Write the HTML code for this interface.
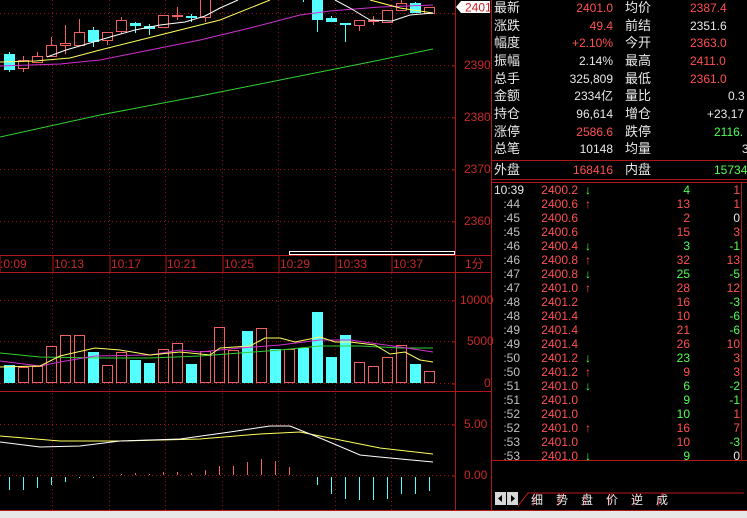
<!DOCTYPE html>
<html><head><meta charset="utf-8"><style>
html,body{margin:0;padding:0;background:#000;width:747px;height:518px;overflow:hidden}
svg{display:block}
text{font-family:"Liberation Sans","Noto Sans CJK SC",sans-serif;font-size:12px}
.ax{fill:#c82828}
.w{fill:#e8e8e8}.r{fill:#ff5050}.g{fill:#50ff50}
.lb{fill:#e8e8e8;font-size:13px}
</style></head><body>
<svg id="s" width="747" height="518" viewBox="0 0 747 518" xmlns="http://www.w3.org/2000/svg">
<rect width="747" height="518" fill="#000"/>
<rect x="0" y="511" width="747" height="7" fill="#e8e8e8"/>
<g stroke="#a01010" stroke-width="1" stroke-dasharray="1,3" fill="none">
<path d="M0 13.5H455M0 65.5H455M0 117.5H455M0 169.5H455M0 221.5H455M0 300.5H455M0 341.5H455M0 383.5H455M0 424.5H455M0 475.5H455"/>
<path d="M52.5 0V255M109.5 0V255M165.5 0V255M222.5 0V255M278.5 0V255M335.5 0V255M391.5 0V255"/>
<path d="M52.5 273V391M109.5 273V391M165.5 273V391M222.5 273V391M278.5 273V391M335.5 273V391M391.5 273V391"/>
<path d="M52.5 393V510M109.5 393V510M165.5 393V510M222.5 393V510M278.5 393V510M335.5 393V510M391.5 393V510"/>
</g>
<g stroke="#b01818" stroke-width="1" fill="none">
<path d="M455.5 0V510M0 255.5H492M0 272.5H492M0 391.5H492M0 510.5H747M491.5 0V510M491.5 160.5H747M491.5 179.5H747M491.5 182.5H747M741.5 182.5V460M491.5 460.5H747"/>
<path d="M452 14H456M452 66H456M452 118H456M452 170H456M452 222H456M452 301H456M452 342H456M452 384H456M452 425H456M452 476H456"/>
<path d="M0 255V272M53 255V272M110 255V272M166 255V272M223 255V272M279 255V272M336 255V272M392 255V272"/>
</g>
<rect x="289.5" y="251.5" width="165" height="3" fill="none" stroke="#fff"/>
<g id="chart"></g>
<path d="M461 1H490V13H461L456 7Z" fill="#fff"/>
<text x="465" y="11.5" fill="#d02020" font-size="12">2401</text>
<g class="ax">
<text x="464" y="69">2390</text><text x="464" y="121">2380</text><text x="464" y="173">2370</text><text x="464" y="225">2360</text>
<text x="460" y="304">10000</text><text x="467" y="345">5000</text><text x="484" y="387">0</text>
<text x="464" y="428">5.00</text><text x="464" y="479">0.00</text>
<text x="0" y="268">:0:09</text><text x="54" y="268">10:13</text><text x="111" y="268">10:17</text><text x="167" y="268">10:21</text><text x="224" y="268">10:25</text><text x="280" y="268">10:29</text><text x="337" y="268">10:33</text><text x="393" y="268">10:37</text>
<text x="465" y="268" font-size="12">1分</text>
</g>
<g font-size="13">
<text class="lb" x="494" y="12">最新</text><text class="r" x="613" y="12" text-anchor="end">2401.0</text><text class="lb" x="625" y="12">均价</text><text class="r" x="690" y="12">2387.4</text>
<text class="lb" x="494" y="30">涨跌</text><text class="r" x="613" y="30" text-anchor="end">49.4</text><text class="lb" x="625" y="30">前结</text><text class="w" x="690" y="30">2351.6</text>
<text class="lb" x="494" y="47">幅度</text><text class="r" x="613" y="47" text-anchor="end">+2.10%</text><text class="lb" x="625" y="47">今开</text><text class="r" x="690" y="47">2363.0</text>
<text class="lb" x="494" y="65">振幅</text><text class="w" x="613" y="65" text-anchor="end">2.14%</text><text class="lb" x="625" y="65">最高</text><text class="r" x="690" y="65">2411.0</text>
<text class="lb" x="494" y="83">总手</text><text class="w" x="613" y="83" text-anchor="end">325,809</text><text class="lb" x="625" y="83">最低</text><text class="r" x="690" y="83">2361.0</text>
<text class="lb" x="494" y="100">金额</text><text class="w" x="613" y="100" text-anchor="end">2334亿</text><text class="lb" x="625" y="100">量比</text><text class="w" x="728" y="100">0.3</text>
<text class="lb" x="494" y="118">持仓</text><text class="w" x="613" y="118" text-anchor="end">96,614</text><text class="lb" x="625" y="118">增仓</text><text class="w" x="707" y="118">+23,17</text>
<text class="lb" x="494" y="136">涨停</text><text class="r" x="613" y="136" text-anchor="end">2586.6</text><text class="lb" x="625" y="136">跌停</text><text class="g" x="714" y="136">2116.</text>
<text class="lb" x="494" y="153">总笔</text><text class="w" x="613" y="153" text-anchor="end">10148</text><text class="lb" x="625" y="153">均量</text><text class="w" x="742" y="153">3</text>
<text class="lb" x="494" y="174">外盘</text><text class="r" x="613" y="174" text-anchor="end">168416</text><text class="lb" x="625" y="174">内盘</text><text class="g" x="714" y="174">15734</text>
</g>
<g id="ticks"></g>
<rect x="495" y="492" width="11" height="13" fill="#d8d8d8"/><rect x="507" y="492" width="11" height="13" fill="#d8d8d8"/>
<path d="M502 495V502L498 498.5Z M511 495V502L515 498.5Z" fill="#000"/>
<path d="M518 506L528 493H744M533 506L537 493M558 506L562 493M583 506L587 493M608 506L612 493M633 506L637 493M658 506L662 493" stroke="#c01818" fill="none"/>
<g class="lb"><text x="531" y="504">细</text><text x="556" y="504">势</text><text x="581" y="504">盘</text><text x="606" y="504">价</text><text x="631" y="504">逆</text><text x="656" y="504">成</text></g>
</svg>
<script>
(function(){
var NS="http://www.w3.org/2000/svg",g=document.getElementById("chart");
function el(n,a){var e=document.createElementNS(NS,n);for(var k in a)e.setAttribute(k,a[k]);g.appendChild(e);return e;}
var C=[["c",54,70,52,72],["u",60,68,56,72],["u",56,62,52,62],["u",45,56,37,56],["u",43,45,25,54],["u",32,45,19,45],["c",30,42,27,47],["u",32,40,32,45],["u",20,31,17,34],["c",23,26,22,33],["c",26,29,24,35],["u",15,27,15,28],["u",15,16,7,20],["c",16,18,14,22],["u",-5,17,-5,22],["u",-20,-5,-25,-3],["u",-25,-10,-30,-8],["c",-22,-10,-30,-5],["u",-30,-15,-35,-12],["c",-25,-15,-30,-5],["u",-20,-10,-25,-5],["c",-15,-5,-20,2],["c",0,20,-5,32],["c",18,22,16,22],["c",23,25,23,42],["u",20,25,20,31],["u",20,21,16,25],["u",10,22,10,22],["u",3,10,0,10],["c",3,13,2,13],["u",7,13,7,13]];
var V=[285,292,288,229,196,196,246,286,247,270,279,238,219,282,243,172,240,184,175,237,237,233,126,261,195,277,288,261,226,282,304];
function poly(pts,c){el("polyline",{points:pts,fill:"none",stroke:c,"stroke-width":1});}
for(var i=0;i<31;i++){var x=4+14*i,cx=x+5.5,d=C[i],col=d[0]=="c"?"#54ffff":"#f06060";
el("line",{x1:cx,x2:cx,y1:d[3],y2:d[4],stroke:col});
if(d[0]=="c")el("rect",{x:x,y:d[1],width:11,height:Math.max(1,d[2]-d[1]),fill:col});
else el("rect",{x:x+.5,y:d[1]+.5,width:10,height:Math.max(0.5,d[2]-d[1]),fill:"#000",stroke:col});
var vt=Math.round(270+V[i]/3),vh=383-vt;
if(d[0]=="c")el("rect",{x:x,y:vt,width:11,height:vh,fill:"#54ffff"});
else el("rect",{x:x+.5,y:vt+.5,width:10,height:vh-1,fill:"none",stroke:"#f06060"});}
poly("0,137 100,115 200,96 300,76 380,60 433,49","#30d030");
poly("0,66 60,64 100,60 150,50 200,40 250,28 300,15 330,11 380,7 433,5","#d030d0");
poly("0,62 35,61 70,58 100,50 140,40 180,30 220,20 270,0","#ffff60");
poly("370,0 400,8 433,13","#ffff60");
poly("47,57 66,50 90,43 110,37 135,30 160,25 185,22 205,16 220,8 238,0","#fff");
poly("335,0 350,8 370,20 392,21 410,15 433,13","#fff");
poly("0,353 40,357 100,358 150,358 200,356 240,353 280,350 320,346 360,346 400,348 433,348","#30d030");
poly("0,361 40,366 60,362 95,356 150,355 180,350 200,352 240,348 280,345 320,340 350,340 400,347 433,352","#d030d0");
poly("0,367 40,366 60,356 95,348 120,350 150,355 180,352 210,355 220,348 250,346 265,338 280,338 295,342 320,337 335,342 350,342 375,345 390,354 405,352 420,360 433,362","#ffff60");
poly("0,436 60,441 120,441 200,439 260,434 300,432 340,440 380,448 433,454","#ffff60");
poly("0,442 40,447 80,446 120,441 180,439 230,432 270,426 290,426 320,438 360,455 390,458 433,462","#fff");
var H={0:-15,1:-15,2:-13,3:-10,4:-7,5:-3,6:-3,8:1,9:2,10:1,11:3,12:3,13:2,14:5,15:9,16:9,17:13,18:16,19:14,20:8,22:-10,23:-19,24:-24,25:-25,26:-25,27:-24,28:-19,29:-19,30:-16};
for(var k in H){var hx=9.5+14*Number(k),v=H[k];el("line",{x1:hx,x2:hx,y1:v>0?475:477,y2:475-v,stroke:v>0?"#f06060":"#54ffff"});}
var T=[["10:39","2400.2","d","4","g","1","r"],[":44","2400.6","u","13","r","1","r"],[":45","2400.6","","2","r","0","w"],[":45","2400.6","","15","r","3","r"],[":46","2400.4","d","3","g","-1","g"],[":46","2400.8","u","32","r","13","r"],[":47","2400.8","d","25","g","-5","g"],[":47","2401.0","u","28","r","12","r"],[":48","2401.2","","16","r","-3","g"],[":48","2401.4","","10","r","-6","g"],[":49","2401.4","","21","r","-6","g"],[":49","2401.4","","26","r","10","r"],[":50","2401.2","d","23","g","3","r"],[":50","2401.2","u","9","r","3","r"],[":51","2401.0","d","6","g","-2","g"],[":51","2401.0","","9","g","-1","g"],[":52","2401.0","","10","g","1","r"],[":52","2401.0","u","16","r","7","r"],[":53","2401.0","","10","r","-3","g"],[":53","2401.0","d","9","g","0","w"]];
var cl={r:"#ff5050",g:"#50ff50",w:"#e8e8e8"};g=document.getElementById("ticks");
T.forEach(function(r,i){var y=194+i*14;
function tx(x,s,c,a,fs){var e=el("text",{x:x,y:y,fill:c,"text-anchor":a||"start"});if(fs)e.setAttribute("font-size",fs);e.textContent=s;}
if(i==0)tx(494,r[0],"#e8e8e8");else tx(520,r[0],"#c0c0c0","end","10");
tx(578,r[1],"#ff5050","end");
if(r[2])tx(585,r[2]=="u"?"↑":"↓",r[2]=="u"?"#ff5050":"#50ff50","start","14");
tx(690,r[3],cl[r[4]],"end");tx(740,r[5],cl[r[6]],"end");});
})();
</script>
</body></html>
